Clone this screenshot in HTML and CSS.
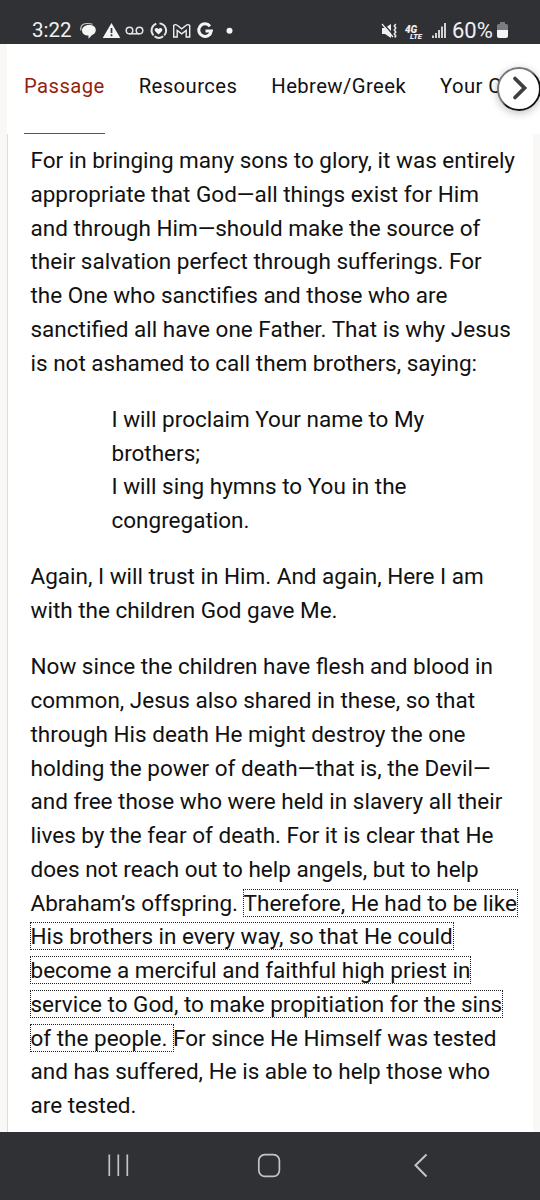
FILE: index.html
```html
<!DOCTYPE html>
<html lang="en">
<head>
    <meta charset="UTF-8">
    <meta name="viewport" content="width=device-width, initial-scale=1.0">
    <title>Passage</title>
    <link rel="stylesheet" href="styles.css">
</head>
<body>
    <header class="status-bar">
        <span class="clock">3:22</span>
        <svg class="notifications" width="156" height="20" viewBox="0 0 156 20">
            <!-- chat -->
            <path d="M1 9.500C0 5 2.500 2.500 6.500 2.500c3 0 4.500 0 6 .8" fill="none" stroke="#ccc" stroke-width="1.200"/>
            <path d="M9 4c4.500 0 6.800 2 6.800 5 0 2.500-1.500 4.300-4 5.200L8.500 17.800v-3.300C4.500 14.500 2 12.500 2 9.500S4.500 4 9 4z" fill="#f5f5f5"/>
            <!-- warning -->
            <path d="M31.500 2 40.300 17H22.700z" fill="#f5f5f5"/>
            <path d="M31.500 7v5M31.500 13.300v2" stroke="#303135" stroke-width="1.700"/>
            <!-- voicemail -->
            <g fill="none" stroke="#e4e4e4" stroke-width="1.500">
                <circle cx="49.500" cy="9.500" r="3.300"/>
                <circle cx="59.500" cy="9.500" r="3.300"/>
                <path d="M49.500 12.800h10"/>
            </g>
            <!-- health -->
            <g fill="none" stroke="#e8e8e8" stroke-width="1.900">
                <path d="M76.300 2.700A7.200 7.200 0 0 0 73.500 14.400"/>
                <path d="M79.500 2.400A7.200 7.200 0 0 1 84.200 14.400"/>
                <path d="M74.500 15.300a7.200 7.200 0 0 0 8.700 0"/>
            </g>
            <path d="M78.500 13.500l-3.500-3.500c-1.500-2.200 1.600-4.400 3.500-2 1.900-2.400 5-.2 3.500 2z" fill="#f5f5f5"/>
            <!-- mail -->
            <path d="M93.700 4.500v11.500H97.200V9.500l4.500 3.400 4.500-3.400v6.500h3.500V4.500c-1-1.300-2.500-1.100-3.500-.2l-4.500 3.500-4.500-3.500c-1-.9-2.500-1.100-3.500.2z" fill="none" stroke="#eee" stroke-width="1.400"/>
            <!-- google -->
            <path d="M130 5.200A6.300 6.300 0 1 0 131.300 10H125.500" fill="none" stroke="#f5f5f5" stroke-width="3"/>
            <circle cx="149.500" cy="9.700" r="3" fill="#f5f5f5"/>
        </svg>
        <div class="status-right">
            <svg class="mute" width="17" height="16" viewBox="0 0 17 16">
                <path d="M1 5h3l6-4v14l-6-4H1z" fill="#f0f0f0"/>
                <path d="M1.500 0l12 13" stroke="#303135" stroke-width="1.500"/>
                <path d="M1 1l11 13" stroke="#f0f0f0" stroke-width="1.200"/>
                <path d="M14.800 1l-1.500 2 1.500 2-1.500 2 1.500 2-1.500 2 1.500 2-1.200 1.500" fill="none" stroke="#e8e8e8" stroke-width="1.500"/>
            </svg>
            <span class="network">4G<small>LTE</small></span>
            <svg class="signal" width="14" height="15" viewBox="0 0 14 15">
                <path d="M1 15v-2.500M4 15v-5M7 15V7M10 15V3.500M13 15V0" stroke="#eee" stroke-width="1.700"/>
            </svg>
            <span class="battery-text">60%</span>
            <svg class="battery" width="11" height="16" viewBox="0 0 11 16">
                <path d="M3 0h5v2h1.500q1.500 0 1.500 1.500V9H0V3.500Q0 2 1.500 2H3z" fill="#7b7c80"/>
                <path d="M0 8h11v6q0 2-2 2H2q-2 0-2-2z" fill="#f5f5f5"/>
            </svg>
        </div>
    </header>

    <nav class="tabs">
        <a class="tab active">Passage</a>
        <a class="tab">Resources</a>
        <a class="tab">Hebrew/Greek</a>
        <a class="tab">Your C</a>
        <button class="next" aria-label="Next tabs">
            <svg width="44" height="44" viewBox="0 0 44 44">
                <defs>
                    <linearGradient id="ring" x1="0" y1="0" x2="1" y2="1">
                        <stop offset=".45" stop-color="#777"/>
                        <stop offset=".55" stop-color="#111"/>
                    </linearGradient>
                </defs>
                <circle cx="22" cy="22" r="21" fill="#fff" stroke="url(#ring)" stroke-width="2"/>
                <path d="M18 11.500 27.500 21 18 30.500" fill="none" stroke="#404040" stroke-width="3.800" stroke-linecap="round"/>
            </svg>
        </button>
    </nav>

    <main class="page">
        <article class="passage">
            <p>For in bringing many sons to glory, it was entirely<br>
            appropriate that God—all things exist for Him<br>
            and through Him—should make the source of<br>
            their salvation perfect through sufferings. For<br>
            the One who sanctifies and those who are<br>
            sanctified all have one Father. That is why Jesus<br>
            is not ashamed to call them brothers, saying:</p>

            <p class="quote">I will proclaim Your name to My<br>
            brothers;<br>
            I will sing hymns to You in the<br>
            congregation.</p>

            <p>Again, I will trust in Him. And again, Here I am<br>
            with the children God gave Me.</p>

            <p>Now since the children have flesh and blood in<br>
            common, Jesus also shared in these, so that<br>
            through His death He might destroy the one<br>
            holding the power of death—that is, the Devil—<br>
            and free those who were held in slavery all their<br>
            lives by the fear of death. For it is clear that He<br>
            does not reach out to help angels, but to help<br>
            Abraham’s offspring. <span class="verse">Therefore, He had to be like<br>
            His brothers in every way, so that He could<br>
            become a merciful and faithful high priest in<br>
            service to God, to make propitiation for the sins<br>
            of the people. </span>For since He Himself was tested<br>
            and has suffered, He is able to help those who<br>
            are tested.</p>
        </article>
    </main>

    <footer class="nav-bar">
        <svg width="540" height="68" viewBox="0 0 540 68">
            <g fill="none" stroke="#c4c4c6" stroke-width="1.700">
                <path d="M109.300 22.500v21.500M118.300 22.500v21.500M127.300 22.500v21.500"/>
                <rect x="258.800" y="22.700" width="20.600" height="21.600" rx="6"/>
                <path d="M426.500 22.500 415.500 33.200l11 11.300" stroke-width="2"/>
            </g>
        </svg>
    </footer>
</body>
</html>
```
FILE: styles.css
```css
*{
    box-sizing: border-box;
}
body{
    margin: 0;
    width: 540px;
    height: 1200px;
    overflow: hidden;
    display: flex;
    flex-direction: column;
    background-color: #f9f8f7;
    font-family: Roboto, "Liberation Sans", sans-serif;
    color: #111;
}
svg{
    display: block;
    flex: none;
}
.status-bar{
    flex: none;
    height: 44px;
    padding: 17px 32px 0 32px;
    display: flex;
    align-items: flex-start;
    background-color: #303135;
    color: #f0f0f0;
    font-size: 20.5px;
    line-height: 27px;
}
.clock{
    width: 48px;
}
.notifications{
    margin-top: 4px;
}
.status-right{
    margin-left: auto;
    display: flex;
}
.mute{
    margin: 6px 7px 0 0;
}
.network{
    width: 17px;
    margin: 9px 10px 0 0;
    font-size: 10px;
    font-weight: 900;
    font-style: italic;
    line-height: 8px;
}
.network small{
    display: block;
    margin-left: 5px;
    font-size: 7.5px;
    line-height: 6px;
}
.signal{
    margin: 6px 6px 0 0;
}
.battery-text{
    width: 45px;
    font-size: 22px;
}
.battery{
    margin-top: 5px;
}
.tabs{
    flex: none;
    position: relative;
    height: 90px;
    margin-left: 7px;
    padding-left: 17px;
    display: flex;
    gap: 34px;
    background-color: #fff;
    overflow: hidden;
    white-space: nowrap;
}
.tab{
    flex: none;
    padding-top: 27px;
    font-size: 20.25px;
    line-height: 30px;
    letter-spacing: 0.42px;
}
.active{
    color: #951f0d;
    border-bottom: 1px solid #a8382a;
}
.next{
    position: absolute;
    top: 23px;
    right: -1px;
    padding: 0;
    border: none;
    border-radius: 50%;
    background: none;
    box-shadow: 0 2px 8px rgba(0, 0, 0, 0.25);
}
.page{
    flex: 1;
    min-height: 0;
    margin: 0 7px;
    border-left: 1px solid #dcdcdc;
    background-color: #fff;
    overflow: hidden;
}
.passage{
    padding: 10px 0 0 22.5px;
    font-size: 22.5px;
    line-height: 33.75px;
    white-space: nowrap;
}
.passage p{
    margin: 0 0 22.5px;
}
.passage .quote{
    padding-left: 81px;
}
.verse{
    margin: 0 -1px;
    border: 1px dotted #222;
    -webkit-box-decoration-break: clone;
    box-decoration-break: clone;
}
.nav-bar{
    flex: none;
    height: 68px;
    background-color: #303135;
}
```
